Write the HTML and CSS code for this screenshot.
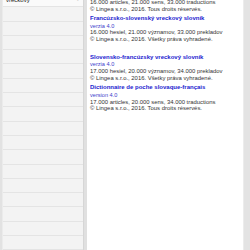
FILE: index.html
```
<!DOCTYPE html>
<html>
<head>
<meta charset="utf-8">
<link rel="stylesheet" href="styles.css">
</head>
<body>
<div class="app">
  <aside class="side">
    <div class="edge"></div>
    <ul class="list">
      <li class="row first"><span>vreckový</span><span class="chev">›</span></li>
      <li class="row"></li><li class="row"></li><li class="row"></li><li class="row"></li>
      <li class="row"></li><li class="row"></li><li class="row"></li><li class="row"></li>
      <li class="row"></li><li class="row"></li><li class="row"></li><li class="row"></li>
      <li class="row"></li><li class="row"></li><li class="row"></li><li class="row"></li>
      <li class="row"></li>
    </ul>
    <div class="divider"></div>
  </aside>
  <main class="content">
    <section class="entry top">
      <p class="line">16.000 articles, 21.000 sens, 33.000 traductions</p>
      <p class="line">© Lingea s.r.o., 2016. Tous droits réservés.</p>
    </section>
    <section class="entry">
      <h2 class="title">Francúzsko-slovenský vreckový slovník</h2>
      <p class="ver">verzia 4.0</p>
      <p class="line">16.000 hesiel, 21.000 významov, 33.000 prekladov</p>
      <p class="line">© Lingea s.r.o., 2016. Všetky práva vyhradené.</p>
    </section>
    <section class="entry wide">
      <h2 class="title">Slovensko-francúzsky vreckový slovník</h2>
      <p class="ver">verzia 4.0</p>
      <p class="line">17.000 hesiel, 20.000 významov, 34.000 prekladov</p>
      <p class="line">© Lingea s.r.o., 2016. Všetky práva vyhradené.</p>
    </section>
    <section class="entry">
      <h2 class="title">Dictionnaire de poche slovaque-français</h2>
      <p class="ver">version 4.0</p>
      <p class="line">17.000 articles, 20.000 sens, 34.000 traductions</p>
      <p class="line">© Lingea s.r.o., 2016. Tous droits réservés.</p>
    </section>
  </main>
  <div class="rstrip"></div>
</div>
</body>
</html>
```
FILE: styles.css
```
* { box-sizing: border-box; }
html, body { margin: 0; padding: 0; }
body {
  width: 250px; height: 250px; overflow: hidden;
  font-family: "Liberation Sans", Arial, sans-serif;
  background: #fff;
}
.app { display: flex; height: 250px; }
.side { display: flex; width: 87px; flex: none; background: #f1f1f1; }
.edge { width: 3px; background: #e2e2e2; border-right: 1px solid #ebebeb; }
.list { list-style: none; margin: 0; padding: 0; flex: 1; margin-top: -7px; }
.row {
  height: 14.3px; border-bottom: 1px solid #e4e4e4; background: #f3f3f3;
  display: flex; align-items: center; justify-content: space-between;
  padding: 0 4px 0 3px; font-size: 6px; color: #222;
}
.row.first { background: #fafafa; }
.chev { color: #c4c4c4; font-size: 7px; }
.divider { width: 4px; background: #e0e0e0; border-left: 1px solid #d6d6d6; }
.content { flex: 1; padding: 0 0 0 3px; margin-top: -1px; }
.entry { margin-bottom: 2.5px; }
.entry.wide { margin-top: 11px; }
.title { margin: 0; font-size: 6px; font-weight: bold; color: #2323cf; line-height: 7.5px; }
.ver { margin: 0; font-size: 5.6px; color: #3d3dcc; line-height: 6.8px; }
.line { margin: 0; font-size: 5.9px; color: #333; line-height: 6.8px; }
.rstrip { width: 7px; flex: none; background: #e3e3e3; border-left: 1px solid #ececec; }
```
